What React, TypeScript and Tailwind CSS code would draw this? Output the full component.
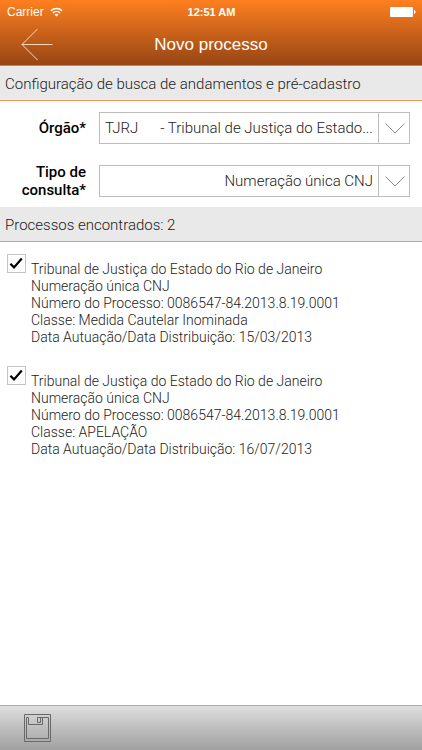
import { useState } from "react";

type Processo = {
  id: string;
  tribunal: string;
  tipo: string;
  numero: string;
  classe: string;
  data: string;
};

const PROCESSOS: Processo[] = [
  {
    id: "p1",
    tribunal: "Tribunal de Justiça do Estado do Rio de Janeiro",
    tipo: "Numeração única CNJ",
    numero: "0086547-84.2013.8.19.0001",
    classe: "Medida Cautelar Inominada",
    data: "15/03/2013",
  },
  {
    id: "p2",
    tribunal: "Tribunal de Justiça do Estado do Rio de Janeiro",
    tipo: "Numeração única CNJ",
    numero: "0086547-84.2013.8.19.0001",
    classe: "APELAÇÃO",
    data: "16/07/2013",
  },
];

function StatusBar() {
  return (
    <div className="grid h-6 grid-cols-3 items-center pr-1.5 pl-[7px] text-[11px] leading-4 text-white">
      <div className="flex items-center gap-1.5">
        <span className="text-xs">Carrier</span>
        <svg width="13" height="10" viewBox="0 0 13 10" fill="none" aria-hidden="true">
          <path d="M1 3.7C4 0.7 9 0.7 12 3.7" stroke="white" strokeWidth="1.6" />
          <path d="M3 5.9C5 4 8 4 10 5.9" stroke="white" strokeWidth="1.6" />
          <path d="M4.5 7.4C5.6 6.4 7.4 6.4 8.5 7.4L6.5 9.6Z" fill="white" />
        </svg>
      </div>
      <span className="text-center font-bold">12:51 AM</span>
      <svg className="justify-self-end" width="26" height="10" viewBox="0 0 26 10" aria-hidden="true">
        <rect width="23" height="10" rx="1" fill="white" />
        <path d="M24 3C26 3.6 26 6.4 24 7Z" fill="white" />
      </svg>
    </div>
  );
}

function Header() {
  return (
    <header className="border-b border-[#b08a74] bg-linear-to-b from-[#ff801f] to-[#984615] font-['Liberation_Sans',Arial,sans-serif]">
      <StatusBar />
      <div className="grid h-[41px] grid-cols-[64px_1fr_64px] items-center">
        <button type="button" aria-label="Voltar" className="flex justify-center pl-2.5">
          <svg width="32" height="33" viewBox="0 0 32 33" fill="none" stroke="#ffd9bd" aria-hidden="true">
            <path d="M16.5 1L1 16.5L16.5 32M1 16.5H31.5" />
          </svg>
        </button>
        <h1 className="text-center text-[17px] leading-6 text-white">Novo processo</h1>
      </div>
    </header>
  );
}

function SectionBar({ children }: { children: React.ReactNode }) {
  return (
    <h2 className="h-[35px] border-b border-[#e99a55] bg-[#e9e9e9] px-[5px] text-[15px] leading-9 font-light whitespace-nowrap">
      {children}
    </h2>
  );
}

function SelectField({
  id,
  label,
  options,
  alignRight = false,
}: {
  id: string;
  label: string;
  options: string[];
  alignRight?: boolean;
}) {
  return (
    <div className="grid grid-cols-[86px_1fr] items-center gap-x-[13px]">
      <label htmlFor={id} className="text-right text-[15px] leading-[18px] font-medium text-black">
        {label}
      </label>
      <div className="relative">
        <select
          id={id}
          className={`block h-8 w-full appearance-none truncate rounded-none border border-[#bdbdbd] bg-white pl-[5px] text-[15px] font-light ${
            alignRight ? "pr-9 [text-align-last:right]" : "pr-8"
          }`}
        >
          {options.map((option) => (
            <option key={option}>{option}</option>
          ))}
        </select>
        <span className="pointer-events-none absolute inset-y-0 right-0 flex w-8 items-center justify-center border-l border-[#bdbdbd]">
          <svg width="20" height="11" viewBox="0 0 20 11" fill="none" stroke="#8c8c8c" aria-hidden="true">
            <path d="M0.5 0.5L10 10L19.5 0.5" />
          </svg>
        </span>
      </div>
    </div>
  );
}

function ProcessoItem({ processo }: { processo: Processo }) {
  const [checked, setChecked] = useState(true);

  return (
    <li>
      <label className="flex gap-[5px] text-[14px] leading-[17px] font-light">
        <span className="relative h-[19px] w-[19px] shrink-0">
          <input
            type="checkbox"
            checked={checked}
            onChange={(e) => setChecked(e.target.checked)}
            className="block h-full w-full appearance-none border border-[#c4c4c4] bg-white"
          />
          {checked && (
            <svg
              className="pointer-events-none absolute inset-0"
              width="19"
              height="19"
              viewBox="0 0 19 19"
              fill="none"
              aria-hidden="true"
            >
              <path d="M3.4 9.8L7 13.4L14.8 4.6" stroke="black" strokeWidth="2.2" />
            </svg>
          )}
        </span>
        <span className="pt-[7px]">
          <span className="block">{processo.tribunal}</span>
          <span className="block">{processo.tipo}</span>
          <span className="block">Número do Processo: {processo.numero}</span>
          <span className="block">Classe: {processo.classe}</span>
          <span className="block">Data Autuação/Data Distribuição: {processo.data}</span>
        </span>
      </label>
    </li>
  );
}

export default function App() {
  return (
    <div className="flex min-h-screen flex-col bg-white font-['Roboto','Noto_Sans',sans-serif] text-[#222]">
      <Header />
      <main className="flex-1">
        <SectionBar>Configuração de busca de andamentos e pré-cadastro</SectionBar>
        <form className="flex flex-col gap-[19px] pt-[11px] pr-3 pb-2">
          <SelectField
            id="orgao"
            label="Órgão*"
            options={["TJRJ\u00a0\u00a0\u00a0\u00a0\u00a0\u00a0- Tribunal de Justiça do Estado..."]}
          />
          <SelectField id="tipo" label="Tipo de consulta*" options={["Numeração única CNJ"]} alignRight />
        </form>
        <SectionBar>Processos encontrados: {PROCESSOS.length}</SectionBar>
        <ul className="flex flex-col gap-5 px-[7px] py-3">
          {PROCESSOS.map((processo) => (
            <ProcessoItem key={processo.id} processo={processo} />
          ))}
        </ul>
      </main>
      <footer className="flex h-[45px] items-center border-t border-[#a8a8a8] bg-linear-to-b from-[#dedede] to-[#a0a0a0] px-6">
        <button type="button" aria-label="Salvar">
          <svg width="27" height="28" viewBox="0 0 27 28" fill="none" stroke="#686868" aria-hidden="true">
            <path d="M0.5 0.5H26.5V27.5H0.5Z" />
            <path d="M4.5 3.5H2.5V24.5H24.5V3.5H18.5V10.5H4.5V3.5" />
            <path d="M18.5 3.5H13.5V8.5H16.5V3.5" />
          </svg>
        </button>
      </footer>
    </div>
  );
}
